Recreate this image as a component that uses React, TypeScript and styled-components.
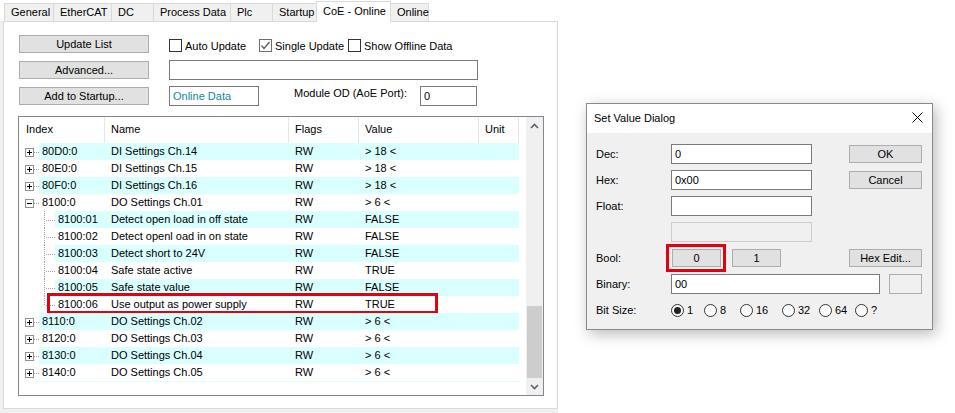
import React from 'react';
import styled, { createGlobalStyle } from 'styled-components';

const GlobalStyle = createGlobalStyle`
  html, body { margin: 0; padding: 0; background: #fff; }
  body { font-family: "Liberation Sans", Arial, sans-serif; font-size: 11px; color: #000; }
  * { box-sizing: border-box; }
`;

const Screen = styled.div`
  display: flex;
  width: 955px;
  height: 413px;
  background: #fff;
  overflow: hidden;
`;

const LeftPane = styled.div`
  width: 558px;
  display: flex;
  flex-direction: column;
`;

const TabStrip = styled.div`
  height: 21px;
  display: flex;
  align-items: flex-end;
  padding-left: 4px;
  position: relative;
  z-index: 2;
`;

const Tab = styled.div<{ $w: number; $active?: boolean }>`
  width: ${p => p.$w}px;
  height: ${p => (p.$active ? 21 : 18)}px;
  margin-right: -1px;
  margin-bottom: ${p => (p.$active ? -1 : 0)}px;
  border: 1px solid #d9d9d9;
  border-bottom: none;
  background: ${p => (p.$active ? '#fff' : '#f0f0f0')};
  padding-left: 6px;
  line-height: ${p => (p.$active ? 18 : 17)}px;
  white-space: nowrap;
  position: relative;
  z-index: ${p => (p.$active ? 3 : 1)};
`;

const PanelArea = styled.div`
  flex: 1;
  display: flex;
  flex-direction: column;
  padding: 0 0 4px 3px;
  background: #f0f0f0;
`;

const Panel = styled.div`
  flex: 1;
  background: #fff;
  border: 1px solid #d9d9d9;
  display: flex;
  flex-direction: column;
`;

const Controls = styled.div`
  display: flex;
  flex-direction: column;
  gap: 6px;
  padding: 12px 0 0 15px;
`;

const CtrlRow = styled.div`
  display: flex;
  align-items: center;
  height: 20px;
`;

const WinButton = styled.button<{ $w: number }>`
  width: ${p => p.$w}px;
  height: 18px;
  padding: 0;
  margin: 0;
  background: #e1e1e1;
  border: 1px solid #adadad;
  font: inherit;
  color: #000;
  text-align: center;
  line-height: 16px;
  flex: none;
`;

const LeftButton = styled(WinButton)`
  margin-right: 20px;
`;

const CheckLabel = styled.label<{ $w?: number }>`
  display: flex;
  align-items: center;
  width: ${p => (p.$w ? `${p.$w}px` : 'auto')};
  padding-top: 3px;
  white-space: nowrap;
`;

const CheckBox = styled.span<{ $dim?: boolean }>`
  width: 13px;
  height: 13px;
  border: 1px solid ${p => (p.$dim ? '#6d6d6d' : '#333')};
  background: #fff;
  margin-right: 3px;
  display: flex;
  align-items: center;
  justify-content: center;
  flex: none;
`;

const TextBox = styled.div<{ $w: number; $teal?: boolean }>`
  width: ${p => p.$w}px;
  height: 20px;
  border: 1px solid #7a7a7a;
  background: #fff;
  padding-left: 3px;
  line-height: 18px;
  color: ${p => (p.$teal ? '#14889c' : '#000')};
  flex: none;
`;

const OdLabel = styled.span`
  width: 126px;
  margin-left: 35px;
  padding-bottom: 6px;
  white-space: nowrap;
`;

const ListBox = styled.div`
  margin: 10px 0 0 14px;
  width: 526px;
  height: 280px;
  border: 1px solid #828790;
  display: flex;
`;

const ListMain = styled.div`
  flex: 1;
  display: flex;
  flex-direction: column;
  background: #fff;
`;

const HeaderRow = styled.div`
  height: 26px;
  display: flex;
`;

const HeadCell = styled.div<{ $w: number; $pad: number }>`
  width: ${p => p.$w}px;
  padding-left: ${p => p.$pad}px;
  border-right: 1px solid #e5e5e5;
  line-height: 25px;
  flex: none;
`;

const Row = styled.div`
  display: flex;
  height: 17px;
  line-height: 17px;
  position: relative;
`;

const RowBody = styled.div<{ $alt: boolean }>`
  display: flex;
  background: ${p => (p.$alt ? '#d9ffff' : '#fff')};
`;

const Cell = styled.div<{ $w: number; $pad?: number }>`
  width: ${p => p.$w}px;
  padding-left: ${p => p.$pad ?? 6}px;
  white-space: nowrap;
  overflow: hidden;
  flex: none;
`;

const RowPeek = styled.div`
  height: 1px;
  width: 480px;
  margin-left: 20px;
  background: #d9ffff;
`;

const Highlight = styled.div`
  position: absolute;
  left: 28px;
  top: -3px;
  width: 391px;
  height: 21px;
  border: 3px solid #e3000f;
  pointer-events: none;
`;

const ScrollBar = styled.div`
  width: 17px;
  background: #f0f0f0;
  display: flex;
  flex-direction: column;
`;

const ScrollArrow = styled.div`
  height: 17px;
  display: flex;
  align-items: center;
  justify-content: center;
`;

const ScrollTrack = styled.div`
  flex: 1;
  display: flex;
  flex-direction: column;
  justify-content: flex-end;
`;

const Thumb = styled.div`
  height: 72px;
  margin: 0 1px;
  background: #cdcdcd;
`;

const BottomGap = styled.div`
  flex: 1;
`;

/* ---------- Dialog ---------- */

const RightArea = styled.div`
  flex: 1;
  padding: 103px 0 0 28px;
`;

const Dialog = styled.div`
  width: 347px;
  height: 227px;
  border: 1px solid #8a8a8a;
  background: #f0f0f0;
  box-shadow: 3px 4px 14px rgba(0, 0, 0, 0.28);
  display: flex;
  flex-direction: column;
`;

const TitleBar = styled.div`
  height: 29px;
  background: #fff;
  display: flex;
  align-items: center;
  justify-content: space-between;
  padding: 0 9px 2px 7px;
`;

const DialogBody = styled.div`
  display: flex;
  flex-direction: column;
  gap: 6px;
  padding: 11px 10px 0 9px;
`;

const DRow = styled.div`
  display: flex;
  align-items: center;
  height: 20px;
`;

const DLabel = styled.span`
  width: 75px;
  flex: none;
`;

const Field = styled.div<{ $w: number; $disabled?: boolean }>`
  width: ${p => p.$w}px;
  height: 20px;
  border: 1px solid ${p => (p.$disabled ? '#cccccc' : '#7a7a7a')};
  background: ${p => (p.$disabled ? '#f0f0f0' : '#fff')};
  padding-left: 3px;
  line-height: 18px;
  flex: none;
`;

const SideButton = styled(WinButton)`
  margin-left: auto;
`;

const SideBox = styled.div`
  width: 33px;
  height: 20px;
  margin-left: auto;
  border: 1px solid #adadad;
  background: #f0f0f0;
`;

const BoolButton = styled(WinButton)<{ $marked?: boolean }>`
  position: relative;
  margin-left: ${p => (p.$marked ? 1 : 11)}px;
  &::after {
    content: '';
    display: ${p => (p.$marked ? 'block' : 'none')};
    position: absolute;
    left: -7px;
    top: -6px;
    right: -6px;
    bottom: -6px;
    border: 3px solid #e3000f;
  }
`;

const RadioItem = styled.label<{ $w?: number }>`
  display: flex;
  align-items: center;
  width: ${p => (p.$w ? `${p.$w}px` : 'auto')};
  flex: none;
`;

const RadioCircle = styled.span<{ $on?: boolean }>`
  width: 13px;
  height: 13px;
  border-radius: 50%;
  border: 1px solid #333;
  background: #fff;
  margin-right: 3px;
  display: flex;
  align-items: center;
  justify-content: center;
  &::after {
    content: '';
    display: ${p => (p.$on ? 'block' : 'none')};
    width: 7px;
    height: 7px;
    border-radius: 50%;
    background: #222;
  }
`;

/* ---------- Data ---------- */

type Kind = 'plus' | 'minus' | 'child' | 'lastChild';
interface Entry {
  idx: string;
  name: string;
  value: string;
  kind: Kind;
  mark?: boolean;
}

const entries: Entry[] = [
  { idx: '80D0:0', name: 'DI Settings Ch.14', value: '> 18 <', kind: 'plus' },
  { idx: '80E0:0', name: 'DI Settings Ch.15', value: '> 18 <', kind: 'plus' },
  { idx: '80F0:0', name: 'DI Settings Ch.16', value: '> 18 <', kind: 'plus' },
  { idx: '8100:0', name: 'DO Settings Ch.01', value: '> 6 <', kind: 'minus' },
  { idx: '8100:01', name: 'Detect open load in off state', value: 'FALSE', kind: 'child' },
  { idx: '8100:02', name: 'Detect openl oad in on state', value: 'FALSE', kind: 'child' },
  { idx: '8100:03', name: 'Detect short to 24V', value: 'FALSE', kind: 'child' },
  { idx: '8100:04', name: 'Safe state active', value: 'TRUE', kind: 'child' },
  { idx: '8100:05', name: 'Safe state value', value: 'FALSE', kind: 'child' },
  { idx: '8100:06', name: 'Use output as power supply', value: 'TRUE', kind: 'lastChild', mark: true },
  { idx: '8110:0', name: 'DO Settings Ch.02', value: '> 6 <', kind: 'plus' },
  { idx: '8120:0', name: 'DO Settings Ch.03', value: '> 6 <', kind: 'plus' },
  { idx: '8130:0', name: 'DO Settings Ch.04', value: '> 6 <', kind: 'plus' },
  { idx: '8140:0', name: 'DO Settings Ch.05', value: '> 6 <', kind: 'plus' },
];

const tabs = [
  { label: 'General', w: 50 },
  { label: 'EtherCAT', w: 59 },
  { label: 'DC', w: 43 },
  { label: 'Process Data', w: 78 },
  { label: 'Plc', w: 43 },
  { label: 'Startup', w: 45 },
  { label: 'CoE - Online', w: 75, active: true },
  { label: 'Online', w: 39 },
];

const TreeGutter: React.FC<{ kind: Kind }> = ({ kind }) => {
  if (kind === 'plus' || kind === 'minus') {
    return (
      <svg width={20} height={17} style={{ flex: 'none', display: 'block' }}>
        <rect x={6.5} y={5.5} width={8} height={8} fill="#fff" stroke="#919191" />
        <line x1={8} y1={9.5} x2={13} y2={9.5} stroke="#000" />
        {kind === 'plus' && <line x1={10.5} y1={7} x2={10.5} y2={12} stroke="#000" />}
        <line x1={15} y1={9.5} x2={20} y2={9.5} stroke="#a0a0a0" strokeDasharray="1 1" />
      </svg>
    );
  }
  return (
    <svg width={36} height={17} style={{ flex: 'none', display: 'block' }}>
      <line x1={25.5} y1={0} x2={25.5} y2={kind === 'lastChild' ? 10 : 17} stroke="#a0a0a0" strokeDasharray="1 1" />
      <line x1={27} y1={9.5} x2={36} y2={9.5} stroke="#a0a0a0" strokeDasharray="1 1" />
    </svg>
  );
};

const Chevron: React.FC<{ up?: boolean }> = ({ up }) => (
  <svg width={9} height={6}>
    <polyline
      points={up ? '1,5 4.5,1.5 8,5' : '1,1 4.5,4.5 8,1'}
      fill="none"
      stroke="#606060"
      strokeWidth={1.6}
    />
  </svg>
);

const CheckMark: React.FC = () => (
  <svg width={11} height={11}>
    <polyline points="1.5,5.5 4,8.5 9.5,2" fill="none" stroke="#555" strokeWidth={1.2} />
  </svg>
);

const CloseIcon: React.FC = () => (
  <svg width={11} height={11}>
    <line x1={0.5} y1={0.5} x2={10.5} y2={10.5} stroke="#000" strokeWidth={1} />
    <line x1={10.5} y1={0.5} x2={0.5} y2={10.5} stroke="#000" strokeWidth={1} />
  </svg>
);

const radios = [
  { label: '1', w: 33, on: true },
  { label: '8', w: 36 },
  { label: '16', w: 42 },
  { label: '32', w: 37 },
  { label: '64', w: 36 },
  { label: '?' },
];

export default function App() {
  return (
    <>
      <GlobalStyle />
      <Screen>
        <LeftPane>
          <TabStrip>
            {tabs.map(t => (
              <Tab key={t.label} $w={t.w} $active={t.active}>
                {t.label}
              </Tab>
            ))}
          </TabStrip>
          <PanelArea>
            <Panel>
              <Controls>
                <CtrlRow>
                  <LeftButton $w={130}>Update List</LeftButton>
                  <CheckLabel $w={90}>
                    <CheckBox />
                    Auto Update
                  </CheckLabel>
                  <CheckLabel $w={89}>
                    <CheckBox $dim>
                      <CheckMark />
                    </CheckBox>
                    Single Update
                  </CheckLabel>
                  <CheckLabel>
                    <CheckBox />
                    Show Offline Data
                  </CheckLabel>
                </CtrlRow>
                <CtrlRow>
                  <LeftButton $w={130}>Advanced...</LeftButton>
                  <TextBox $w={309} />
                </CtrlRow>
                <CtrlRow>
                  <LeftButton $w={130}>Add to Startup...</LeftButton>
                  <TextBox $w={90} $teal>
                    Online Data
                  </TextBox>
                  <OdLabel>Module OD (AoE Port):</OdLabel>
                  <TextBox $w={57}>0</TextBox>
                </CtrlRow>
              </Controls>
              <ListBox>
                <ListMain>
                  <HeaderRow>
                    <HeadCell $w={86} $pad={7}>Index</HeadCell>
                    <HeadCell $w={184} $pad={6}>Name</HeadCell>
                    <HeadCell $w={70} $pad={6}>Flags</HeadCell>
                    <HeadCell $w={120} $pad={6}>Value</HeadCell>
                    <HeadCell $w={40} $pad={6}>Unit</HeadCell>
                  </HeaderRow>
                  {entries.map((e, i) => {
                    const child = e.kind === 'child' || e.kind === 'lastChild';
                    return (
                      <Row key={e.idx}>
                        <TreeGutter kind={e.kind} />
                        <RowBody $alt={i % 2 === 0}>
                          <Cell $w={child ? 50 : 66} $pad={3}>{e.idx}</Cell>
                          <Cell $w={184}>{e.name}</Cell>
                          <Cell $w={70}>RW</Cell>
                          <Cell $w={120}>{e.value}</Cell>
                          <Cell $w={40} />
                        </RowBody>
                        {e.mark && <Highlight />}
                      </Row>
                    );
                  })}
                  <RowPeek />
                </ListMain>
                <ScrollBar>
                  <ScrollArrow>
                    <Chevron up />
                  </ScrollArrow>
                  <ScrollTrack>
                    <Thumb />
                  </ScrollTrack>
                  <ScrollArrow>
                    <Chevron />
                  </ScrollArrow>
                </ScrollBar>
              </ListBox>
              <BottomGap />
            </Panel>
          </PanelArea>
        </LeftPane>
        <RightArea>
          <Dialog>
            <TitleBar>
              <span>Set Value Dialog</span>
              <CloseIcon />
            </TitleBar>
            <DialogBody>
              <DRow>
                <DLabel>Dec:</DLabel>
                <Field $w={141}>0</Field>
                <SideButton $w={73}>OK</SideButton>
              </DRow>
              <DRow>
                <DLabel>Hex:</DLabel>
                <Field $w={141}>0x00</Field>
                <SideButton $w={73}>Cancel</SideButton>
              </DRow>
              <DRow>
                <DLabel>Float:</DLabel>
                <Field $w={141} />
              </DRow>
              <DRow>
                <DLabel />
                <Field $w={141} $disabled />
              </DRow>
              <DRow>
                <DLabel>Bool:</DLabel>
                <BoolButton $w={49} $marked>0</BoolButton>
                <BoolButton $w={49}>1</BoolButton>
                <SideButton $w={73}>Hex Edit...</SideButton>
              </DRow>
              <DRow>
                <DLabel>Binary:</DLabel>
                <Field $w={209}>00</Field>
                <SideBox />
              </DRow>
              <DRow>
                <DLabel>Bit Size:</DLabel>
                {radios.map(r => (
                  <RadioItem key={r.label} $w={r.w}>
                    <RadioCircle $on={r.on} />
                    {r.label}
                  </RadioItem>
                ))}
              </DRow>
            </DialogBody>
          </Dialog>
        </RightArea>
      </Screen>
    </>
  );
}
